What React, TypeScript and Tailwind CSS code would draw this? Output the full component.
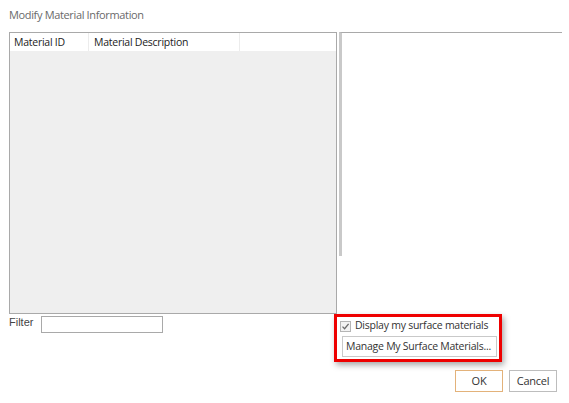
import React from 'react'

const ui = { fontFamily: '"Open Sans", "Noto Sans", sans-serif' }

function Checkbox() {
  return (
    <div className="w-[11px] h-[11px] border border-[#b5b5b5] bg-[#f3f3f3] flex items-center justify-center">
      <svg width="9" height="9" viewBox="0 0 9 9" fill="none">
        <path d="M1.5 4.6 L3.6 6.7 L7.6 1.8" stroke="#6b6b6b" strokeWidth="1.3" />
      </svg>
    </div>
  )
}

export default function App() {
  return (
    <div className="w-[569px] h-[403px] bg-white text-[10.5px] text-[#333] tracking-[-0.25px]" style={ui}>
      {/* Title */}
      <div className="h-[32px] pl-[9px] pt-[7px] text-[11px] text-[#6a6a6a] tracking-[-0.35px]">
        Modify Material Information
      </div>

      {/* Lists */}
      <div className="flex items-start pl-[9px] gap-[2px] h-[282px]">
        <div className="w-[328px] h-[282px] border border-[#a9a9a9] bg-[#efefef] flex flex-col">
          <div className="h-[18px] bg-white flex text-[#222]">
            <div className="w-[79px] pl-[4px] border-r border-[#ececec] leading-[18px]">Material ID</div>
            <div className="w-[151px] pl-[5px] border-r border-[#ececec] leading-[18px]">Material Description</div>
            <div className="flex-1" />
          </div>
        </div>
        <div className="w-[223px] h-[224px] border-t border-t-[#a9a9a9] border-l-[3px] border-l-[#c9c9c9]" />
      </div>

      {/* Filter + surface materials */}
      <div className="flex items-start h-[48px] pl-[9px]">
        <div className="w-[325px] flex items-center gap-[8px] pt-[2px]">
          <span className="text-[11px] text-[#444] tracking-normal -mt-[4px]" style={{ fontFamily: '"Liberation Sans", Arial, sans-serif' }}>
            Filter
          </span>
          <div className="w-[122px] h-[17px] border border-[#a9a9a9] bg-white" />
        </div>
        <div className="w-[168px] h-[48px] border-[3px] border-[#ee0000] shadow-[2px_3px_6px_rgba(0,0,0,0.35)] pl-[3px] pt-[1px] flex flex-col">
          <div className="flex items-center gap-[4px] h-[16px] text-[#333] whitespace-nowrap">
            <Checkbox />
            <span>Display my surface materials</span>
          </div>
          <div className="mt-[2px] ml-[2px] w-[155px] h-[21px] border border-[#c9c9c9] bg-white pl-[3px] leading-[19px] text-[#333] whitespace-nowrap">
            Manage My Surface Materials...
          </div>
        </div>
      </div>

      {/* Buttons */}
      <div className="flex justify-end gap-[6px] pr-[12px] pt-[8px]">
        <button className="w-[48px] h-[22px] border border-[#e3b27a] bg-white text-[11px] text-[#333]">OK</button>
        <button className="w-[48px] h-[22px] border border-[#bdbdbd] bg-white text-[11px] text-[#333]">Cancel</button>
      </div>
    </div>
  )
}
